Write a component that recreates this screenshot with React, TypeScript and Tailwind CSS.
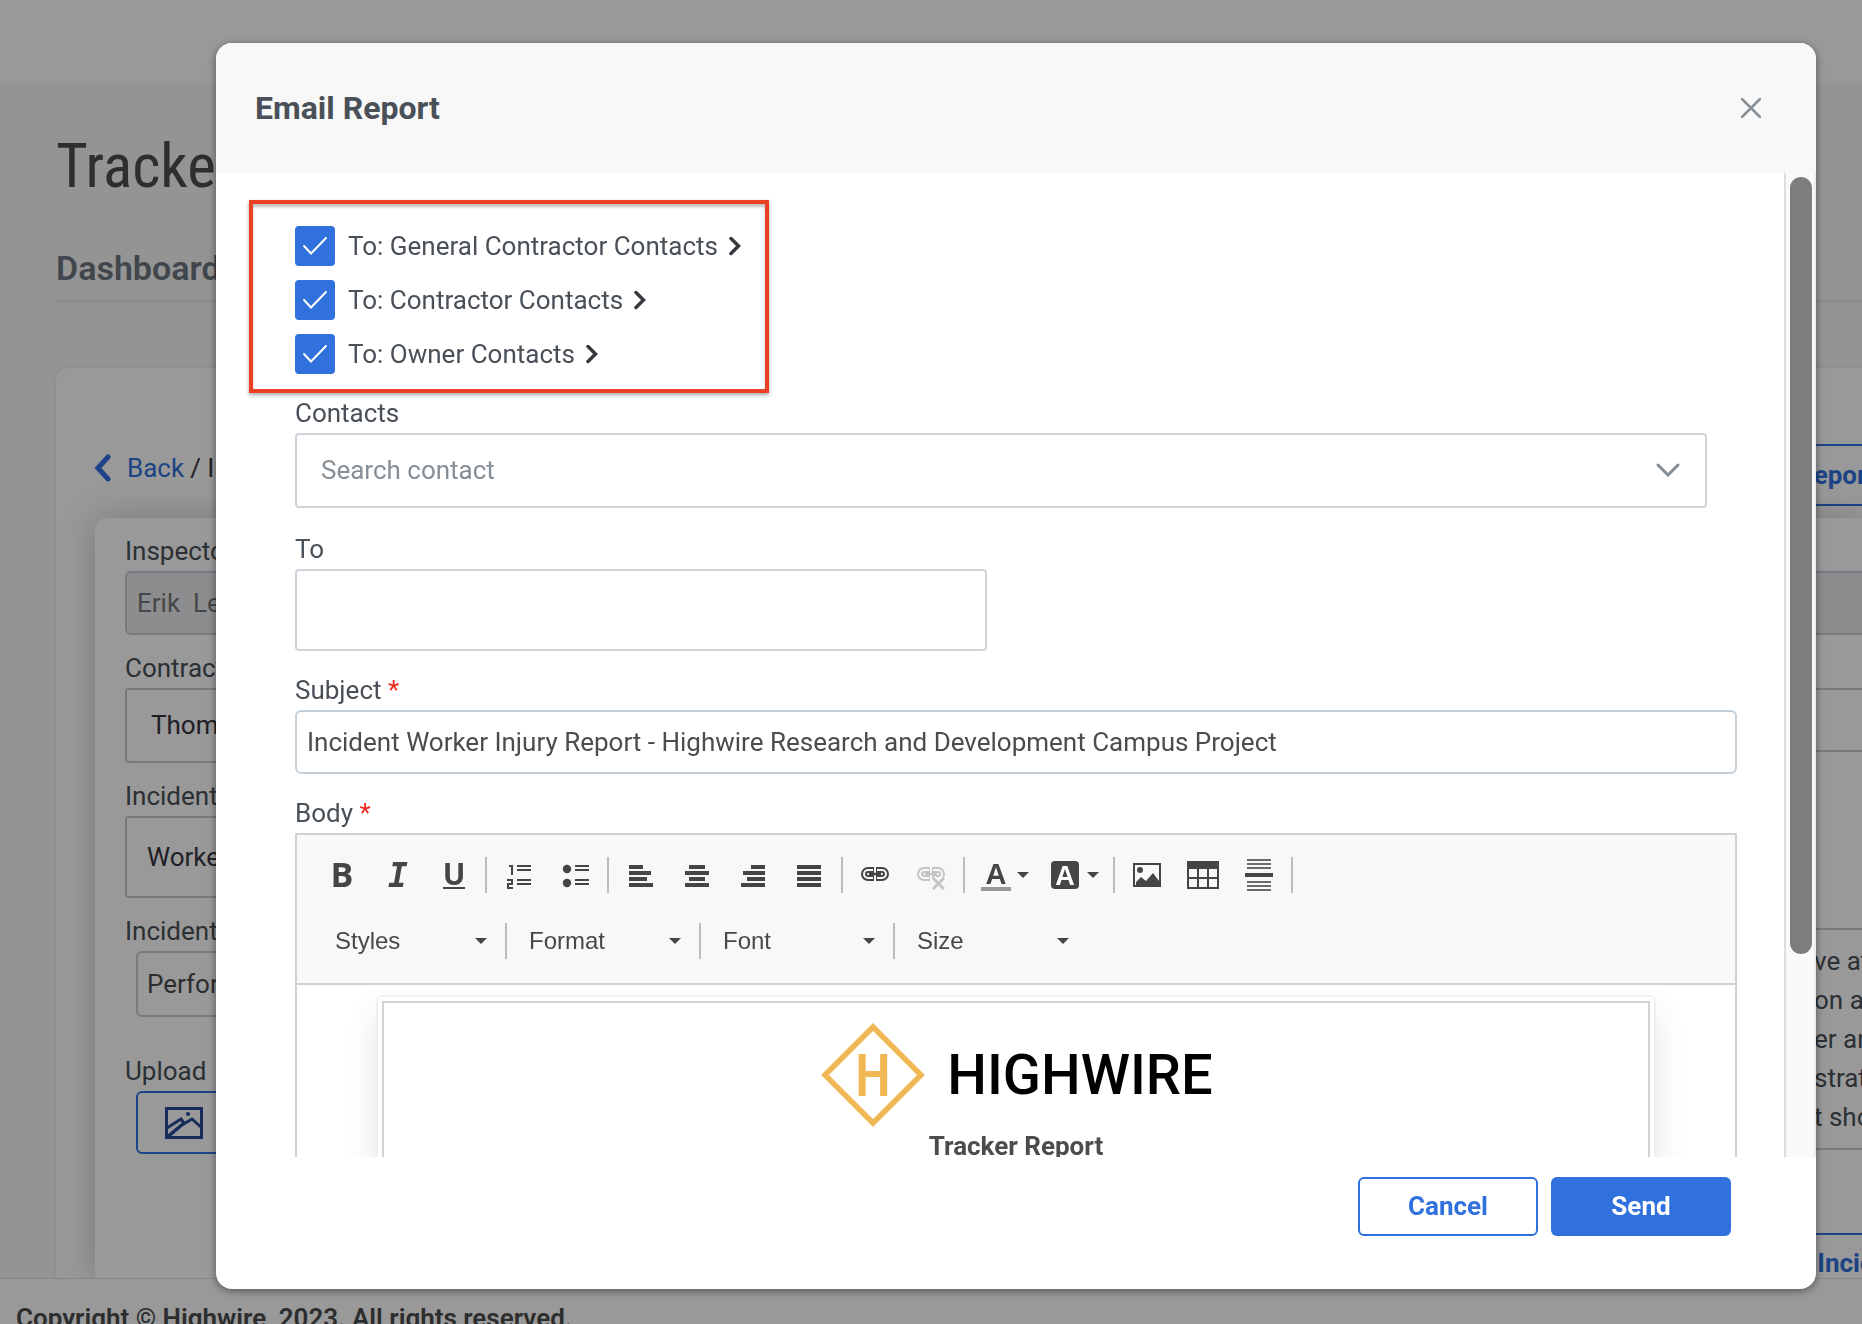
import React from 'react';

interface FieldProps {
  id: string;
  label: string;
  required?: boolean;
  className?: string;
  children: React.ReactNode;
}

const Field: React.FC<FieldProps> = ({ id, label, required = false, className = '', children }) => (
  <div className={className}>
    <label htmlFor={id} className="block leading-10">
      {label}
      {required && <span className="text-[#ee2a1e]"> *</span>}
    </label>
    {children}
  </div>
);

const RecipientRow: React.FC<{ id: string; label: string }> = ({ id, label }) => (
  <div className="flex items-center">
    <span className="relative block size-10">
      <input
        id={id}
        type="checkbox"
        defaultChecked
        className="peer block size-10 appearance-none rounded border-2 border-[#ced4da] checked:border-[#3071de] checked:bg-[#3071de]"
      />
      <svg
        viewBox="0 0 40 40"
        className="pointer-events-none absolute inset-0 hidden size-10 peer-checked:block"
        fill="none"
        stroke="white"
        strokeWidth="2"
        strokeLinecap="round"
      >
        <path d="M9 20l7 7.500L31 12" />
      </svg>
    </span>
    <label htmlFor={id} className="ml-[13px] leading-10">
      {label}
    </label>
    <button type="button" aria-label={`Expand ${label}`} className="ml-[11px]">
      <svg viewBox="0 0 12 20" className="h-5 w-3" fill="none" stroke="#37393f" strokeWidth="3.500" strokeLinecap="round">
        <path d="M2 2.500l7.500 7.500L2 17.500" />
      </svg>
    </button>
  </div>
);

const Icon: React.FC<{ children: React.ReactNode }> = ({ children }) => (
  <svg viewBox="0 0 32 32" className="size-8 shrink-0" fill="#454545">
    {children}
  </svg>
);

const Caret: React.FC = () => (
  <svg viewBox="0 0 12 6" className="h-1.5 w-3 shrink-0" fill="#454545">
    <path d="M0 0h12L6 6z" />
  </svg>
);

const ToolButton: React.FC<{ label: string; caret?: boolean; children: React.ReactNode }> = ({
  label,
  caret = false,
  children,
}) => (
  <button
    type="button"
    aria-label={label}
    className={`flex h-14 items-center ${caret ? 'w-[70px] gap-1.5 pl-2.5' : 'w-14 justify-center'}`}
  >
    <Icon>{children}</Icon>
    {caret && <Caret />}
  </button>
);

const Separator: React.FC = () => <span className="mx-1 h-9 w-0.5 shrink-0 bg-[#bcbcbc]" />;

// Horizontal bars given as [x, y, width]
const Bars: React.FC<{ rows: number[][]; height: number; fill?: string }> = ({ rows, height, fill }) => (
  <>
    {rows.map(([x, y, width]) => (
      <rect key={y} x={x} y={y} width={width} height={height} fill={fill} />
    ))}
  </>
);

const ChainLinks: React.FC<{ color: string }> = ({ color }) => (
  <g fill="none">
    <g stroke={color} strokeWidth="6">
      <path d="M15 11H9a4 4 0 0 0 0 8h6" />
      <path d="M17 11h6a4 4 0 0 1 0 8h-6" />
    </g>
    <g stroke="#f8f8f8" strokeWidth="2">
      <path d="M14 11H9a4 4 0 0 0 0 8h5" />
      <path d="M18 11h5a4 4 0 0 1 0 8h-5" />
    </g>
    <path d="M10 15h12" stroke={color} strokeWidth="2.500" />
  </g>
);

const combos = ['Styles', 'Format', 'Font', 'Size'];

const Toolbar: React.FC = () => (
  <div className="border-b-2 border-[#d1d1d1] bg-[#f8f8f8] pt-3 pb-3.5 pl-4">
    <div className="flex items-center">
      <ToolButton label="Bold">
        <text x="17" y="28" textAnchor="middle" className="font-['Open_Sans'] text-[34px] font-bold">B</text>
      </ToolButton>
      <ToolButton label="Italic">
        <text x="17" y="28" textAnchor="middle" className="font-['DejaVu_Sans_Mono'] text-[33px] font-bold italic">I</text>
      </ToolButton>
      <ToolButton label="Underline">
        <text x="17" y="26" textAnchor="middle" className="font-['Open_Sans'] text-[30px] font-bold">U</text>
        <rect x="6" y="28" width="22" height="2" />
      </ToolButton>
      <Separator />
      <ToolButton label="Numbered list">
        <path d="M6 7h3v9M4 21h5v4H5v4h5" fill="none" stroke="#454545" strokeWidth="2" />
        <Bars height={2} rows={[[14, 6, 14], [14, 10, 14], [14, 20, 14], [14, 24, 14]]} />
      </ToolButton>
      <ToolButton label="Bulleted list">
        <circle cx="8" cy="10" r="4.200" />
        <circle cx="8" cy="24" r="4.200" />
        <Bars height={2} rows={[[16, 6, 14], [16, 10, 14], [16, 20, 14], [16, 24, 14]]} />
      </ToolButton>
      <Separator />
      <ToolButton label="Align left">
        <Bars height={4} rows={[[4, 6, 14], [4, 12, 22], [4, 18, 18], [4, 24, 24]]} />
      </ToolButton>
      <ToolButton label="Center">
        <Bars height={4} rows={[[8, 6, 16], [4, 12, 24], [8, 18, 16], [4, 24, 24]]} />
      </ToolButton>
      <ToolButton label="Align right">
        <Bars height={4} rows={[[14, 6, 14], [6, 12, 22], [10, 18, 18], [4, 24, 24]]} />
      </ToolButton>
      <ToolButton label="Justify">
        <Bars height={4} rows={[[4, 6, 24], [4, 12, 24], [4, 18, 24], [4, 24, 24]]} />
      </ToolButton>
      <Separator />
      <ToolButton label="Link">
        <ChainLinks color="#454545" />
      </ToolButton>
      <ToolButton label="Unlink">
        <ChainLinks color="#c4c4c4" />
        <path d="M18 19l11 11M29 19L18 30" stroke="#f8f8f8" strokeWidth="6" />
        <path d="M18 19l11 11M29 19L18 30" stroke="#c4c4c4" strokeWidth="3" />
      </ToolButton>
      <Separator />
      <ToolButton label="Text color" caret>
        <text x="17" y="25" textAnchor="middle" className="font-['Liberation_Sans'] text-[29px] font-bold">A</text>
        <rect x="2" y="28" width="30" height="4" fill="#999999" />
      </ToolButton>
      <ToolButton label="Background color" caret>
        <rect x="2" y="2" width="28" height="28" rx="4" />
        <text x="16" y="26" textAnchor="middle" fill="white" className="font-['Liberation_Sans'] text-[27px] font-bold">A</text>
      </ToolButton>
      <Separator />
      <ToolButton label="Image">
        <rect x="3" y="5" width="26" height="22" fill="none" stroke="#454545" strokeWidth="2" />
        <circle cx="9" cy="11" r="3" />
        <path d="M5 27v-4l5-5 5 4 7-8 6 8v5z" />
      </ToolButton>
      <ToolButton label="Table">
        <rect x="0" y="2" width="32" height="8" />
        <path d="M1 10v19h30V10M1 19h30M11 10v19M21 10v19" fill="none" stroke="#454545" strokeWidth="2" />
      </ToolButton>
      <ToolButton label="Horizontal line">
        <Bars height={2} fill="#6a6a6a" rows={[[4, 0, 24], [4, 4, 24], [4, 8, 24], [4, 22, 24], [4, 26, 24], [4, 30, 24]]} />
        <rect x="2" y="14" width="28" height="4" />
      </ToolButton>
      <Separator />
    </div>

    <div className="mt-2.5 flex h-14 items-center pl-1 font-['Liberation_Sans',sans-serif] text-[24px] text-[#484848]">
      {combos.map((name, index) => (
        <React.Fragment key={name}>
          {index > 0 && <Separator />}
          <span className="relative flex w-[184px] items-center">
            <select aria-label={name} className="h-14 w-full appearance-none bg-transparent pl-[18px]">
              <option>{name}</option>
            </select>
            <span className="pointer-events-none absolute right-3.5">
              <Caret />
            </span>
          </span>
        </React.Fragment>
      ))}
    </div>
  </div>
);

const Logo: React.FC = () => (
  <div className="flex h-[104px] items-center justify-center gap-[22px] pl-0.5">
    <svg viewBox="0 0 104 104" className="size-[104px]">
      <path d="M52 4l48 48-48 48L4 52z" fill="none" stroke="#f0b755" strokeWidth="5.500" />
      <text x="52" y="73" textAnchor="middle" fill="#f0b755" className="font-['Roboto_Condensed','Roboto'] text-[59px] font-medium">H</text>
    </svg>
    <span className="text-[56px] leading-none font-medium text-black">HIGHWIRE</span>
  </div>
);

const notes = 've attended\non and\ner and\nstration\nt should';

const TrackerPage: React.FC = () => (
  <div className="flex h-screen flex-col overflow-hidden bg-[#f7f7f7]">
    <nav className="h-[84px] shrink-0 bg-white" />
    <main className="flex min-h-0 flex-1 flex-col pt-[46px] pl-14">
      <h1 className="font-['Roboto_Condensed','Liberation_Sans_Narrow','Roboto',sans-serif] text-[61px] leading-[72px] text-[#4d4d4d]">
        Tracker
      </h1>
      <div className="mt-10 border-b-4 border-[#eceef0] pb-[5px]">
        <a href="#dashboard" className="text-[34px] leading-[52px] font-semibold text-[#6c757d]">
          Dashboard
        </a>
      </div>

      <section className="mt-[65px] flex min-h-0 flex-1 flex-col overflow-hidden rounded-tl-xl bg-white pl-[39px] shadow-[0_0_4px_rgba(0,0,0,0.08)]">
        <div className="flex shrink-0 items-center justify-between pt-[76px] pb-3">
          <div className="flex items-center pb-3.5">
            <svg viewBox="0 0 18 28" className="mr-3.5 h-7 w-[18px]" fill="none" stroke="#3071de" strokeWidth="5" strokeLinecap="round">
              <path d="M13 3L3 14l10 11" />
            </svg>
            <a href="#back" className="text-[#3071de]">Back</a>
            <span className="ml-1.5 text-[#37353f]">/ Incident</span>
          </div>
          <button
            type="button"
            className="-mr-10 h-[62px] rounded-md border-2 border-[#3071de] px-6 font-bold text-[#3071de]"
          >
            Email Report
          </button>
        </div>

        <div className="flex min-h-0 flex-1 gap-8 rounded-tl-xl bg-white pt-[13px] pl-[30px] shadow-[0_0_36px_rgba(0,0,0,0.22)]">
          <div className="flex flex-1 flex-col gap-[13px]">
            <Field id="inspector" label="Inspector">
              <input
                id="inspector"
                disabled
                defaultValue="Erik  Lee"
                className="block h-16 w-full rounded-md border-2 border-[#c3ced6] bg-[#e9ecef] pl-2.5 text-[#777777]"
              />
            </Field>
            <Field id="contractor" label="Contractor">
              <select id="contractor" className="block h-[75px] w-full appearance-none rounded border-2 border-[#c5ccd3] pl-6 text-[#37353f]">
                <option>Thomas</option>
              </select>
            </Field>
            <Field id="incident-type" label="Incident Type">
              <select id="incident-type" className="block h-[82px] w-full appearance-none rounded border-2 border-[#c5ccd3] pl-5 text-[#37353f]">
                <option>Worker Injury</option>
              </select>
            </Field>
            <Field id="incident-task" label="Incident Task">
              <input
                id="incident-task"
                defaultValue="Performing"
                className="ml-[11px] block h-[66px] w-full rounded-md border-2 border-[#c3ced6] pl-[9px] text-[#4c4c4c]"
              />
            </Field>
            <div className="mt-[21px]">
              <p className="leading-10">Upload</p>
              <button
                type="button"
                aria-label="Upload image"
                className="ml-[11px] flex h-[63px] w-[200px] items-center rounded-md border-2 border-[#3071de] pl-[27px]"
              >
                <svg viewBox="0 0 38 32" className="h-8 w-[38px]" fill="none" stroke="#274a98" strokeWidth="3">
                  <rect x="1.500" y="1.500" width="35" height="29" />
                  <path d="M2 21l14-9 3 4L2 30M17 18l10-6 10 9M19 16L4 29" />
                  <circle cx="23" cy="7" r="2" fill="#274a98" stroke="none" />
                </svg>
              </button>
            </div>
          </div>

          <div className="flex-1 pt-10">
            <input aria-label="Project" disabled className="block h-16 w-full border-y-2 border-[#c3ced6] bg-[#e9ecef]" />
            <input aria-label="Date" className="mt-[53px] block h-16 w-full border-y-2 border-[#c3ced6]" />
            <div className="mt-44 flex justify-end border-y-2 border-[#c3ced6]">
              <textarea
                aria-label="Description"
                readOnly
                wrap="off"
                defaultValue={notes}
                className="block h-[218px] w-12 resize-none overflow-hidden pt-3 leading-[39px] whitespace-pre"
              />
            </div>
            <div className="mt-[83px] flex justify-end">
              <button
                type="button"
                className="-mr-20 h-[60px] shrink-0 rounded-md border-2 border-[#3071de] px-7 font-bold text-[#3071de]"
              >
                Incident
              </button>
            </div>
          </div>
        </div>
      </section>
    </main>
    <footer className="relative h-[46px] shrink-0 overflow-hidden border-t border-[#e0e0e0] bg-white pt-[19px] pl-4">
      <p className="leading-10 font-semibold text-[#4c4c4c]">Copyright © Highwire, 2023. All rights reserved.</p>
    </footer>
  </div>
);

const EmailReportDialog: React.FC = () => (
  <div className="fixed inset-0 bg-black/40 pt-[43px] pr-[46px] pb-[35px] pl-[216px]">
    <div
      role="dialog"
      aria-labelledby="dialog-title"
      className="flex h-full flex-col overflow-hidden rounded-2xl bg-white shadow-[0_2px_8px_rgba(0,0,0,0.45)]"
    >
      <header className="flex h-[130px] shrink-0 items-center justify-between bg-[#f8f8f8] pr-[55px] pl-[39px]">
        <h2 id="dialog-title" className="text-[32px] font-bold">Email Report</h2>
        <button type="button" aria-label="Close">
          <svg viewBox="0 0 20 20" className="size-5" fill="none" stroke="#868e96" strokeWidth="2.500" strokeLinecap="round">
            <path d="M1 1l18 18M19 1L1 19" />
          </svg>
        </button>
      </header>

      <div className="flex min-h-0 flex-1">
        <form id="email-form" className="min-w-0 flex-1 overflow-hidden pt-[27px] pr-[47px] pl-[79px]">
          <div className="-ml-[46px] flex w-[520px] flex-col gap-3.5 border-4 border-[#ec4025] pt-[22px] pr-2 pb-[15px] pl-[42px] shadow-[0_2px_4px_rgba(0,0,0,0.35),inset_0_3px_3px_rgba(0,0,0,0.25)]">
            <RecipientRow id="to-general" label="To: General Contractor Contacts" />
            <RecipientRow id="to-contractor" label="To: Contractor Contacts" />
            <RecipientRow id="to-owner" label="To: Owner Contacts" />
          </div>

          <Field id="contacts" label="Contacts" className="mr-[30px]">
            <div className="relative">
              <input
                id="contacts"
                placeholder="Search contact"
                className="block h-[75px] w-full rounded border-2 border-[#ced4da] pb-0.5 pl-6 placeholder:text-[#868e96]"
              />
              <svg
                viewBox="0 0 24 14"
                className="pointer-events-none absolute top-[30px] right-[27px] h-3.5 w-6"
                fill="none"
                stroke="#868e96"
                strokeWidth="3"
                strokeLinecap="round"
              >
                <path d="M2 2l10 10L22 2" />
              </svg>
            </div>
          </Field>

          <Field id="to" label="To" className="mt-[21px]">
            <input id="to" className="block h-[82px] w-[48%] rounded border-2 border-[#ced4da]" />
          </Field>

          <Field id="subject" label="Subject" required className="mt-[19px]">
            <input
              id="subject"
              defaultValue="Incident Worker Injury Report - Highwire Research and Development Campus Project"
              className="block h-16 w-full rounded-md border-2 border-[#c3d0d9] pl-2.5 text-[#4c4c4c]"
            />
          </Field>

          <Field id="body" label="Body" required className="mt-[19px]">
            <div id="body" className="border-2 border-[#d1d1d1]">
              <Toolbar />
              <div className="mx-[79px] mt-2.5 rounded-md border-2 border-[#f0f0f0] p-1 shadow-[0_16px_32px_rgba(0,0,0,0.1)]">
                <div className="border-2 border-[#ced4da] bg-white pt-5">
                  <Logo />
                  <p className="h-40 text-center leading-[39px] font-bold text-[#4c4c4c]">Tracker Report</p>
                </div>
              </div>
            </div>
          </Field>
        </form>

        <div className="flex w-8 shrink-0 flex-col border-x-2 border-l-[#dddddd] border-r-[#ededed] bg-[#fafafa] pt-1 pr-0.5 pb-[203px] pl-1">
          <div className="flex-1 rounded-full bg-[#7d7d7d]" />
        </div>
      </div>

      <footer className="flex h-[132px] shrink-0 items-start justify-end gap-[13px] pt-5 pr-[85px] font-bold">
        <button type="button" className="h-[59px] w-[180px] rounded-md border-2 border-[#3071de] bg-white text-[#3071de]">
          Cancel
        </button>
        <button type="submit" form="email-form" className="h-[59px] w-[180px] rounded-md bg-[#3071de] text-white">
          Send
        </button>
      </footer>
    </div>
  </div>
);

export default function App() {
  return (
    <div className="font-['Roboto',sans-serif] text-[26px] text-[#495057]">
      <TrackerPage />
      <EmailReportDialog />
    </div>
  );
}
